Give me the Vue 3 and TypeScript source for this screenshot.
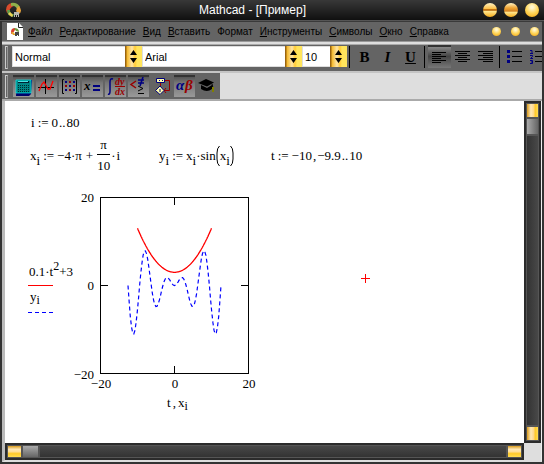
<script setup lang="ts">
import { ref } from 'vue'

const menus = [
  ['Ф', 'айл'], ['Р', 'едактирование'], ['В', 'ид'], ['В', 'ставить'], ['', 'Формат'],
  ['И', 'нструменты'], ['С', 'имволы'], ['О', 'кно'], ['С', 'правка'],
]
const styleName = ref('Normal')
const fontName = ref('Arial')
const fontSize = ref('10')

// Plot frame inside the graph drawing; both axes run from -20 to 20
const frame = { x: 72.5, y: 8.5, w: 148, h: 176 }
const toPoint = (x: number, y: number): string =>
  `${(frame.x + ((x + 20) / 40) * frame.w).toFixed(1)},${(frame.y + ((20 - y) / 40) * frame.h).toFixed(1)}`

const parabola = Array.from({ length: 201 }, (_, k) => {
  const t = -10 + k * 0.1
  return toPoint(t, 0.1 * t * t + 3)
}).join(' ')
const wave = Array.from({ length: 81 }, (_, i) => {
  const x = -4 * Math.PI + (Math.PI / 10) * i
  return toPoint(x, x * Math.sin(x))
}).join(' ')
const matrixDots = [0, 1, 2].flatMap((r) => [0, 1, 2].map((c) => ({ x: 6 + c * 4, y: 4 + r * 4, blue: (r + c) % 2 === 0 })))
const keys = [0, 1, 2, 3].flatMap((r) => [0, 1, 2, 3, 4, 5].map((c) => ({ x: 5 + c * 2, y: 8 + r * 2 })))
</script>

<template>
  <div class="window">
    <header class="title">
      <svg class="logo" width="17" height="16" viewBox="0 0 17 16" aria-hidden="true">
        <path d="M1 8Q1 2 7 1L9 4Q5 5 4 10L2 11Z" fill="#d94b2c" />
        <path d="M6 1Q12 0 15 5L12 7Q10 3 6 4Z" fill="#8fb04a" />
        <path d="M14 4Q18 9 14 12L11 9L12 6Z" fill="#e7a23a" />
        <path d="M2 8L5 8Q5 12 9 12L8 15Q2 14 2 8Z" fill="#5f9a48" />
        <path d="M3 12L5 10L8 13L7 15Z" fill="#f0cf55" />
        <path d="M9 10h5v5h-1v-2h-1v2h-1v-2h-1v2h-1z" fill="#b8b8b0" />
      </svg>
      <h1>Mathcad - [Пример]</h1>
      <div class="orbs">
        <button class="orb dash" aria-label="Свернуть"></button>
        <button class="orb dash low" aria-label="Развернуть"></button>
        <button class="orb" aria-label="Закрыть"></button>
      </div>
    </header>

    <nav class="menu">
      <svg width="16" height="17" viewBox="0 0 16 17" aria-hidden="true">
        <path d="M0 0h12l4 4v13H0z" fill="#fff" />
        <path d="M11.500 0v4.500H16" fill="none" stroke="#222" />
        <path d="M4 9Q4 5 8 5L8 7L6 10L4 11Z" fill="#d9412c" />
        <path d="M7 5Q12 5 12 9L9 8Z" fill="#6e9c3e" />
        <path d="M4 9L6 9L9 12L6 12Z" fill="#e4a72d" />
        <path d="M8 9h4v4h-1v-1h-1v1H8z" fill="#444" />
      </svg>
      <button v-for="(m, i) in menus" :key="i" class="item"><u>{{ m[0] }}</u>{{ m[1] }}</button>
      <div class="orbs small">
        <button class="orb" aria-label="Свернуть документ"></button>
        <button class="orb" aria-label="Восстановить документ"></button>
        <button class="orb" aria-label="Закрыть документ"></button>
      </div>
    </nav>

    <div class="bar format">
      <i class="grip"></i>
      <label class="combo style">
        <select v-model="styleName" aria-label="Стиль"><option>Normal</option></select>
        <svg width="17" height="21" viewBox="0 0 17 21" aria-hidden="true"><path d="M5 9L8.500 4L12 9zM5 12h7L8.500 17z" /></svg>
      </label>
      <label class="combo font">
        <select v-model="fontName" aria-label="Шрифт"><option>Arial</option></select>
        <svg width="17" height="21" viewBox="0 0 17 21" aria-hidden="true"><path d="M5 9L8.500 4L12 9zM5 12h7L8.500 17z" /></svg>
      </label>
      <label class="combo size">
        <select v-model="fontSize" aria-label="Размер"><option>10</option></select>
        <svg width="17" height="21" viewBox="0 0 17 21" aria-hidden="true"><path d="M5 9L8.500 4L12 9zM5 12h7L8.500 17z" /></svg>
      </label>
      <i class="sep"></i>
      <button class="tool letter"><b>B</b></button>
      <button class="tool letter"><em>I</em></button>
      <button class="tool letter"><u>U</u></button>
      <i class="sep"></i>
      <button class="tool pressed" aria-label="По левому краю">
        <svg width="15" height="13" viewBox="0 0 15 13"><path d="M0 1.500h14M0 3.500h9M0 5.500h14M0 7.500h9M0 9.500h14M0 11.500h9" stroke="#000" /></svg>
      </button>
      <button class="tool" aria-label="По центру">
        <svg width="15" height="13" viewBox="0 0 15 13"><path d="M0 1.500h15M3 3.500h9M0 5.500h15M3 7.500h9M0 9.500h15M3 11.500h9" stroke="#000" /></svg>
      </button>
      <button class="tool" aria-label="По правому краю">
        <svg width="15" height="13" viewBox="0 0 15 13"><path d="M0 1.500h15M5 3.500h10M0 5.500h15M5 7.500h10M0 9.500h15M5 11.500h10" stroke="#000" /></svg>
      </button>
      <i class="sep"></i>
      <button class="tool" aria-label="Маркеры">
        <svg width="15" height="14" viewBox="0 0 15 14"><path d="M0 0h3v3H0zM0 5h3v3H0zM0 10h3v3H0z" fill="#000080" /><path d="M5 1.500h10M5 6.500h10M5 11.500h10" stroke="#000" /></svg>
      </button>
      <button class="tool" aria-label="Нумерация">
        <svg width="15" height="14" viewBox="0 0 15 14"><path d="M0 .5h2v3M0 3.500h3M0 5.500h2.500v1L.5 8.500H3M0 10.500h2.500v3H0M1 12h1" fill="none" stroke="#000080" /><path d="M5 1.500h10M5 6.500h10M5 11.500h10" stroke="#000" /></svg>
      </button>
    </div>

    <div class="bar math">
      <div class="palette">
        <i class="grip"></i>
        <button class="key" aria-label="Калькулятор">
          <svg width="21" height="20" viewBox="0 0 21 20"><path d="M4 3h15l-1 14-2 2H3z" fill="#00006a" /><path d="M3 3h15v13H3z" fill="#008484" stroke="#0ff" stroke-width=".6" /><path d="M5 4h11v2H5z" fill="#023" /><path d="M5 4h10v1H5z" fill="#4fe0e0" /><rect v-for="(k, i) in keys" :key="i" :x="k.x" :y="k.y" width="1" height="1" fill="#002b2b" /></svg>
        </button>
        <button class="key" aria-label="График">
          <svg width="21" height="20" viewBox="0 0 21 20"><path d="M2 10.500h16M9.500 2v15" stroke="#000" /><path d="M3 14L6 7L8 5L12 12L14 12L17 4" fill="none" stroke="#f00" stroke-width="1.300" /></svg>
        </button>
        <button class="key" aria-label="Матрица">
          <svg width="21" height="20" viewBox="0 0 21 20"><path d="M5 2.500H3.500v14H5M16 2.500h1.500v14H16" fill="none" stroke="#000" /><rect v-for="(d, i) in matrixDots" :key="i" :x="d.x" :y="d.y" width="2" height="2" :fill="d.blue ? '#000080' : '#900'" /></svg>
        </button>
        <button class="key" aria-label="Вычисление">
          <svg width="21" height="20" viewBox="0 0 21 20"><text x="2" y="13" font-size="13">x</text><path d="M11 8h7v2h-7zM11 12h7v2h-7z" fill="#000080" /></svg>
        </button>
        <button class="key" aria-label="Матанализ">
          <svg width="21" height="20" viewBox="0 0 21 20"><path d="M3 17q2 1 2-3V5q0-4 3-3" fill="none" stroke="#000080" stroke-width="1.500" /><text x="10" y="8" font-size="10" fill="#900">dy</text><path d="M10 9.500h10" stroke="#900" /><text x="10" y="18" font-size="10" fill="#900">dx</text></svg>
        </button>
        <button class="key" aria-label="Булева алгебра">
          <svg width="21" height="20" viewBox="0 0 21 20"><path d="M8 4L3 7.500L8 11" fill="none" stroke="#900" stroke-width="1.500" /><path d="M10 3h6M10 6h6M15 0l-3 9" stroke="#000080" stroke-width="1.600" /><path d="M10 9l5 2.500l-5 2.500M10 16.500h6" fill="none" stroke="#000" /></svg>
        </button>
        <button class="key flat" aria-label="Программирование">
          <svg width="21" height="20" viewBox="0 0 21 20"><path d="M9.500 5v4M13 3.500h5.500v10h-6" fill="none" stroke="#900" /><path d="M15 11l-2 2.500l2 2.500" fill="none" stroke="#900" /><path d="M5.500 1.500h8v4h-8z" fill="#ffa" stroke="#000080" /><path d="M8 3h1v1H8zM11 3h1v1h-1z" fill="#000080" /><path d="M9 9l4 4.500-4 4-4.500-4z" fill="#ffa" stroke="#000080" /><path d="M8.500 12h1v3h-1z" fill="#000080" /></svg>
        </button>
        <button class="key" aria-label="Греческие символы">
          <svg width="21" height="20" viewBox="0 0 21 20"><text x="2" y="13" font-size="15" fill="#000080">α</text><text x="11" y="13" font-size="15" fill="#900">β</text></svg>
        </button>
        <button class="key flat" aria-label="Символика">
          <svg width="21" height="20" viewBox="0 0 21 20"><path d="M1 6l8-4 8 3.500-7 4z" fill="#000" /><path d="M4 8l6 3 5-3v4q-5 4-11 0z" fill="#000" /><path d="M15 7l1 4" stroke="#000" /><path d="M15 10h2v5h-2z" fill="#808000" /></svg>
        </button>
      </div>
    </div>

    <div class="body">
      <main class="sheet">
        <p class="region r-range">i<span class="def">:=</span>0<span class="dots">..</span>80</p>
        <p class="region r-x">x<sub>i</sub><span class="def">:=</span>−4·π<span class="op">+</span><span class="frac"><span>π</span><span>10</span></span><span class="mul">·</span>i</p>
        <p class="region r-y">y<sub>i</sub><span class="def">:=</span>x<sub>i</sub>·sin
          <svg class="paren" width="4" height="22" viewBox="0 0 4 22"><path d="M3.500 1Q1 3 1 8v6q0 5 2.500 7" /></svg>x<sub>i</sub><svg class="paren" width="4" height="22" viewBox="0 0 4 22"><path d="M.5 1Q3 3 3 8v6q0 5-2.500 7" /></svg>
        </p>
        <p class="region r-t">t<span class="def">:=</span>−10<span class="comma">,</span>−9.9<span class="dots">..</span>10</p>
        <svg class="region plot" width="232" height="224" viewBox="0 0 232 224" role="img" aria-label="График">
          <rect :x="frame.x" :y="frame.y" :width="frame.w" :height="frame.h" fill="none" stroke="#000" />
          <path d="M146.500 9v7M146.500 177v7M72 96.500h8M213 96.500h8M72 8.500h8M213 8.500h8" stroke="#000" />
          <polyline :points="wave" fill="none" stroke="#00f" stroke-width="1.200" stroke-dasharray="4 3" />
          <polyline :points="parabola" fill="none" stroke="#f00" stroke-width="1.300" />
          <text x="66" y="13" text-anchor="end">20</text>
          <text x="66" y="101" text-anchor="end">0</text>
          <text x="66" y="190" text-anchor="end">−20</text>
          <text x="73" y="199" text-anchor="middle">−20</text>
          <text x="147" y="199" text-anchor="middle">0</text>
          <text x="221" y="199" text-anchor="middle">20</text>
          <text x="139" y="218">t<tspan dx="2">,</tspan><tspan dx="2">x</tspan><tspan class="index" dy="3">i</tspan></text>
          <text x="1" y="87">0.1·t<tspan class="index" dy="-6">2</tspan><tspan dy="6">+3</tspan></text>
          <path d="M0 96.500h25" stroke="#f00" />
          <text x="2" y="112">y<tspan class="index" dy="3">i</tspan></text>
          <path d="M0 123.500h25" stroke="#00f" stroke-dasharray="4 3" />
        </svg>
        <svg class="region cross" width="9" height="9" viewBox="0 0 9 9" aria-hidden="true"><path d="M4.500 0v9M0 4.500h9" fill="none" stroke="#f00" /></svg>
      </main>
      <div class="scroll vertical">
        <button class="end" aria-label="Вверх"></button><i class="thumb"></i><i class="track"></i><button class="end" aria-label="Вниз"></button>
      </div>
      <div class="scroll horizontal">
        <button class="end" aria-label="Влево"></button><i class="thumb"></i><i class="track"></i><button class="end" aria-label="Вправо"></button>
      </div>
      <div class="corner"></div>
    </div>
  </div>
</template>

<style>
body { margin: 0; }
</style>

<style scoped>
* { box-sizing: border-box; }
button { border: 0; padding: 0; margin: 0; background: none; color: inherit; font: inherit; }
svg { display: block; flex: none; }
.window {
  display: flex; flex-direction: column; height: 100vh; overflow: hidden;
  padding: 0 2px 2px; background: #333; color: #000;
  font-family: "Liberation Sans", sans-serif;
}
.title {
  display: flex; align-items: center;
  flex: none; height: 21px; margin: 0 -2px; padding: 0 5px;
  background: linear-gradient(#383838, #202020 60%, #101010); border-bottom: 1px solid #555;
}
.title h1 { flex: 1; margin: 0; color: #fff; font: 12px/16px "Liberation Sans", sans-serif; text-align: center; }
.orbs { display: flex; justify-content: flex-end; gap: 7px; }
.orb { width: 14px; height: 14px; border-radius: 50%; background: radial-gradient(circle at 50% 30%, #fff6cf 10%, #ffd65a 50%, #f5ac1b 90%); }
.orb.dash { background: linear-gradient(#fff3c4, #ffc24a 40%, #c97610 45%, #b86a10 52%, #ffe58c 60%, #f5ac1b); }
.orb.low { background: linear-gradient(#fff3c4, #f0a534 35%, #d18021 58%, #ffe58c 66%, #f5ac1b); }
.small { gap: 10px; margin-left: auto; padding-right: 3px; }
.small .orb { width: 9px; height: 9px; }
.menu {
  display: flex; align-items: center; gap: 7px; flex: none; height: 20px; padding-left: 5px;
  background: #646464; border-top: 1px solid #3a3a3a; font-size: 10px; line-height: 14px; white-space: nowrap;
}
.menu > svg { margin-right: -2px; }
.bar {
  display: flex; align-items: flex-start; flex: none; overflow: hidden;
  background: #646464; border-top: 1px solid #eee;
}
.format { height: 30px; padding-top: 4px; border-top: 1px solid #999; box-shadow: inset 0 2px #dedede, inset 0 3px #aaa; }
.grip { flex: none; width: 3px; height: 23px; margin: 0 6px 0 3px; border: 1px solid #ccc; border-right-color: #999; }
.format .grip { margin-right: 4px; }
.combo { position: relative; flex: none; height: 22px; }
.combo select {
  width: 100%; height: 21px; padding: 0 17px 0 2px; appearance: none;
  border: 1px solid #ddd; border-radius: 0; background: #fff; color: #000; font: 11px "Liberation Sans", sans-serif;
}
.combo svg { position: absolute; top: 0; right: 0; pointer-events: none; background: linear-gradient(90deg, #9a6410 0 1px, #f5b92c 2px, #ffe6a8 7px, #ffc935 10px, #ffe45c 12px, #ffe45c); }
.style { width: 130px; }
.font { width: 160px; }
.size { width: 45px; }
.sep { flex: none; width: 1px; height: 22px; margin: 0 3px 0 2px; background: #000; }
.tool { display: flex; flex: none; align-items: center; justify-content: center; width: 23px; height: 21px; }
.letter { font: 15px/20px "Liberation Serif", serif; }
.letter b { font-weight: 900; }
.letter em, .letter u { font-weight: bold; }
.pressed { margin-top: 1px; background: linear-gradient(#888, #444 45%, #777); box-shadow: 0 -2px #333, 0 -1px #646464; }
.math { height: 30px; padding: 0; border-top: 2px solid #c4c4c4; border-bottom: 2px solid #aaa; background: #dedede; }
.palette { display: flex; align-items: flex-start; gap: 2px; height: 26px; padding: 2px 2px 0 0; background: #646464; }
.palette .grip { margin-right: 3px; }
.key { flex: none; width: 21px; height: 20px; margin-top: 2px; background: linear-gradient(#555, #777 30%, #999); box-shadow: 0 -2px #333, 0 -1px #646464; }
.key.flat { background: none; box-shadow: none; }
.key text { font-family: "Liberation Serif", serif; font-style: italic; font-weight: bold; }
.body {
  display: grid; grid-template: minmax(0, 1fr) 17px / minmax(0, 1fr) 17px; flex: 1; min-height: 0;
  border-left: 3px solid #bbb; border-bottom: 2px solid #ddd; border-right: 1px solid #eee; background: #dedede;
}
.sheet { position: relative; overflow: hidden; background: #fff; font: 13px/16px "Liberation Serif", serif; }
.region { position: absolute; display: flex; align-items: center; margin: 0; white-space: nowrap; }
.r-range { left: 26px; top: 14px; }
.r-x { left: 25px; top: 36px; }
.r-y { left: 154px; top: 44px; }
.r-t { left: 266px; top: 47px; }
.plot { left: 23px; top: 88px; display: block; }
.cross { left: 356px; top: 173px; }
.def { margin: 0 3px; }
.op { margin: 0 4px; }
.mul { margin: 0 1px; }
.dots { margin: 0 1px; }
.comma { margin: 0 1px; }
.index { font-size: 12px; }
sub { padding-top: 10px; font-size: 13px; line-height: 12px; vertical-align: baseline; }
.frac { display: flex; flex-direction: column; align-items: center; line-height: 16px; }
.frac span:first-child { padding: 0 3px 1px; border-bottom: 1px solid #000; }
.frac span:last-child { padding-top: 3px; }
.paren { fill: none; stroke: #000; }
.scroll { display: flex; gap: 2px; padding: 1px; border: 2px solid #2b2b2b; background: #555; }
.vertical { flex-direction: column; }
.end, .thumb { flex: none; width: 13px; height: 13px; }
.vertical .end { width: 11px; background: linear-gradient(90deg, #d99a1c, #ffe9b8 35%, #ffd98a 60%, #ffc928 75%, #ffdd55); }
.horizontal .end { height: 11px; background: linear-gradient(#d99a1c, #ffe9b8 30%, #ffdf9a 50%, #ffc928 70%, #ffdd55); }
.vertical .thumb { width: 11px; height: 15px; background: linear-gradient(90deg, #aaa, #666); }
.horizontal .thumb { width: 15px; height: 11px; background: linear-gradient(#aaa, #666); }
.track { flex: 1; background: linear-gradient(#484848, #333); }
.vertical .track { background: linear-gradient(90deg, #333, #484848); }
</style>
